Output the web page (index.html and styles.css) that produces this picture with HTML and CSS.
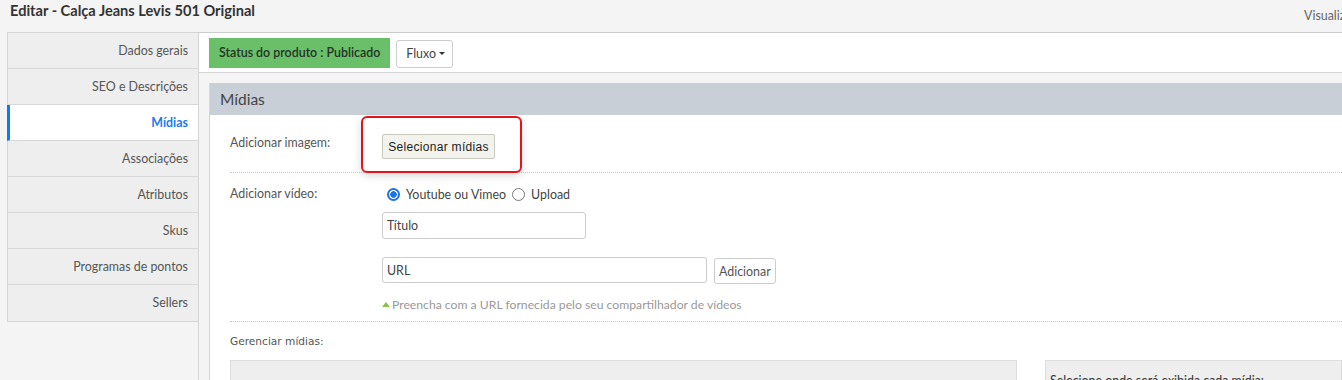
FILE: index.html
```html
<!DOCTYPE html>
<html lang="pt">
<head>
<meta charset="utf-8">
<title>Editar - Calça Jeans Levis 501 Original</title>
<link rel="stylesheet" href="styles.css">
</head>
<body>
<header class="page-head">
  <h1 class="page-title">Editar - Calça Jeans Levis 501 Original</h1>
  <span class="page-view">Visualizar</span>
</header>
<div class="layout">
  <nav class="side">
    <a class="side-item">Dados gerais</a>
    <a class="side-item">SEO e Descrições</a>
    <a class="side-item active">Mídias</a>
    <a class="side-item">Associações</a>
    <a class="side-item">Atributos</a>
    <a class="side-item">Skus</a>
    <a class="side-item">Programas de pontos</a>
    <a class="side-item">Sellers</a>
  </nav>
  <main class="main">
    <div class="toolbar">
      <span class="status">Status do produto : Publicado</span>
      <button class="flow-btn">Fluxo <span class="caret"></span></button>
    </div>
    <section class="panel">
      <h2 class="panel-head">Mídias</h2>
      <div class="panel-body">
        <div class="row row-img">
          <label class="row-label">Adicionar imagem:</label>
          <div class="row-field">
            <div class="highlight">
              <button class="select-btn">Selecionar mídias</button>
            </div>
          </div>
        </div>
        <div class="row row-video">
          <label class="row-label">Adicionar vídeo:</label>
          <div class="row-field video-field">
            <div class="radios">
              <span class="radio checked"></span><span class="radio-text">Youtube ou Vimeo</span>
              <span class="radio"></span><span class="radio-text">Upload</span>
            </div>
            <div class="input input-title">Título</div>
            <div class="url-line">
              <div class="input input-url">URL</div>
              <button class="add-btn">Adicionar</button>
            </div>
            <p class="help"><span class="tri"></span>Preencha com a URL fornecida pelo seu compartilhador de vídeos</p>
          </div>
        </div>
        <div class="row row-manage">
          <label class="row-label manage-label">Gerenciar mídias:</label>
        </div>
        <div class="manage">
          <div class="manage-box"></div>
          <div class="manage-side">Selecione onde será exibida cada mídia:</div>
        </div>
      </div>
    </section>
  </main>
</div>
</body>
</html>
```
FILE: styles.css
```css
* { box-sizing: border-box; }
html, body { margin: 0; padding: 0; }
body {
  background: #f4f4f4;
  font-family: "Source Sans Pro", Lato, "Liberation Sans", sans-serif;
  font-size: 12.4px;
  color: #555;
  width: 1342px;
  height: 380px;
  overflow: hidden;
}
.page-head {
  height: 32px;
  display: flex;
  justify-content: space-between;
  align-items: flex-start;
  padding: 2px 0 0 10px;
  overflow: hidden;
}
.page-title {
  margin: 0;
  font-size: 14.6px;
  font-weight: 700;
  color: #333;
  line-height: 18px;
}
.page-view {
  font-size: 12.4px;
  color: #666;
  line-height: 18px;
  margin-top: 5px;
  margin-right: -14px;
  white-space: nowrap;
}
.layout {
  display: flex;
  padding-left: 7px;
}
.side {
  width: 191px;
  flex: none;
  border: 1px solid #d5d5d5;
  border-right: none;
  background: #eee;
  align-self: flex-start;
}
.side-item {
  display: block;
  height: 36px;
  line-height: 35px;
  text-align: right;
  padding-right: 10px;
  border-bottom: 1px solid #d8d8d8;
  color: #555;
}
.side-item:last-child { border-bottom: none; }
.side-item.active {
  background: #fff;
  color: #1a7cf0;
  font-weight: 700;
  border-left: 3px solid #0d7cf2;
  margin-left: -1px;
}
.main {
  flex: 1;
  border-left: 1px solid #d5d5d5;
  border-top: 1px solid #ccc;
  min-height: 360px;
}
.toolbar {
  height: 40px;
  background: #fff;
  border-bottom: 1px solid #d5d5d5;
  display: flex;
  align-items: center;
  padding-left: 10px;
  gap: 6px;
}
.status {
  background: #6abf69;
  color: #263326;
  font-weight: 600;
  height: 30px;
  line-height: 30px;
  padding: 0 10px;
  white-space: nowrap;
  margin-top: 1px;
}
.flow-btn {
  height: 28px;
  background: #fff;
  border: 1px solid #ccc;
  border-radius: 3px;
  font-family: inherit;
  font-size: 12.4px;
  color: #444;
  padding: 0 7px 0 9px;
  margin-top: 2px;
}
.caret {
  display: inline-block;
  width: 0; height: 0;
  border-left: 3px solid transparent;
  border-right: 3px solid transparent;
  border-top: 3px solid #333;
  vertical-align: 3px;
}
.panel {
  margin: 10px 0 0 10px;
  background: #fff;
  border-left: 1px solid #d5d5d5;
}
.panel-head {
  margin: 0;
  height: 32px;
  background: #c8cfd6;
  font-size: 15.5px;
  font-weight: 400;
  color: #444;
  line-height: 32px;
  padding-left: 10px;
}
.panel-body {
  padding: 0 0 0 20px;
}
.row {
  display: flex;
  border-bottom: 1px dotted #ccc;
}
.row-label {
  width: 132px;
  flex: none;
  color: #555;
}
.row-img { height: 58px; }
.row-img .row-label { padding-top: 20px; }
.highlight {
  width: 161px;
  height: 57px;
  border: 2px solid #e5141b;
  border-radius: 6px;
  box-shadow: 0 3px 8px rgba(0,0,0,0.15);
  padding: 16px 0 0 19px;
  margin-top: 1px;
  margin-left: -1px;
}
.select-btn {
  height: 25px;
  width: 113px;
  background: #f3f3ee;
  border: 1px solid #c9c9bd;
  border-radius: 2px;
  font-family: "Liberation Sans", Arial, sans-serif;
  font-size: 12px;
  letter-spacing: 0.3px;
  color: #222;
  padding: 0;
}
.row-video { padding-top: 11px; height: 149px; }
.row-video .row-label { padding-top: 2px; }
.video-field { padding-left: 20px; }
.radios {
  display: flex;
  align-items: center;
  height: 18px;
  margin-left: 5px;
  margin-top: 1px;
}
.radio {
  width: 13px; height: 13px;
  border: 1px solid #777;
  border-radius: 50%;
  display: inline-block;
  margin-right: 6px;
}
.radio.checked {
  border: 2px solid #1a73e8;
  background: radial-gradient(circle, #1a73e8 0 3px, #fff 3.5px);
}
.radio-text { margin-right: 6px; color: #444; }
.input {
  border: 1px solid #ccc;
  border-radius: 3px;
  height: 27px;
  line-height: 25px;
  padding-left: 4px;
  color: #444;
}
.input-title { width: 204px; margin-top: 9px; }
.url-line { display: flex; gap: 7px; margin-top: 18px; }
.input-url { width: 325px; height: 26px; }
.add-btn {
  height: 26px;
  margin-top: 1px;
  background: #fff;
  border: 1px solid #ccc;
  border-radius: 3px;
  font-family: inherit;
  font-size: 12.4px;
  color: #555;
  padding: 0 4px;
}
.help {
  margin: 13px 0 0;
  color: #999;
  font-size: 12.2px;
}
.tri {
  display: inline-block;
  width: 0; height: 0;
  border-left: 4px solid transparent;
  border-right: 4px solid transparent;
  border-bottom: 5px solid #8bc34a;
  margin-right: 2px;
  vertical-align: 2px;
}
.row-manage { border-bottom: none; height: 38px; }
.manage-label {
  padding-top: 13px;
  font-family: "DejaVu Sans", Verdana, sans-serif;
  font-size: 10.6px;
  width: 300px;
  color: #555;
}
.manage { display: flex; gap: 28px; }
.manage-box {
  width: 787px;
  height: 40px;
  background: #eee;
  border: 1px solid #ddd;
}
.manage-side {
  flex: 1;
  height: 40px;
  background: #eee;
  border: 1px solid #ddd;
  padding: 12px 0 0 4px;
  color: #333;
}
```
